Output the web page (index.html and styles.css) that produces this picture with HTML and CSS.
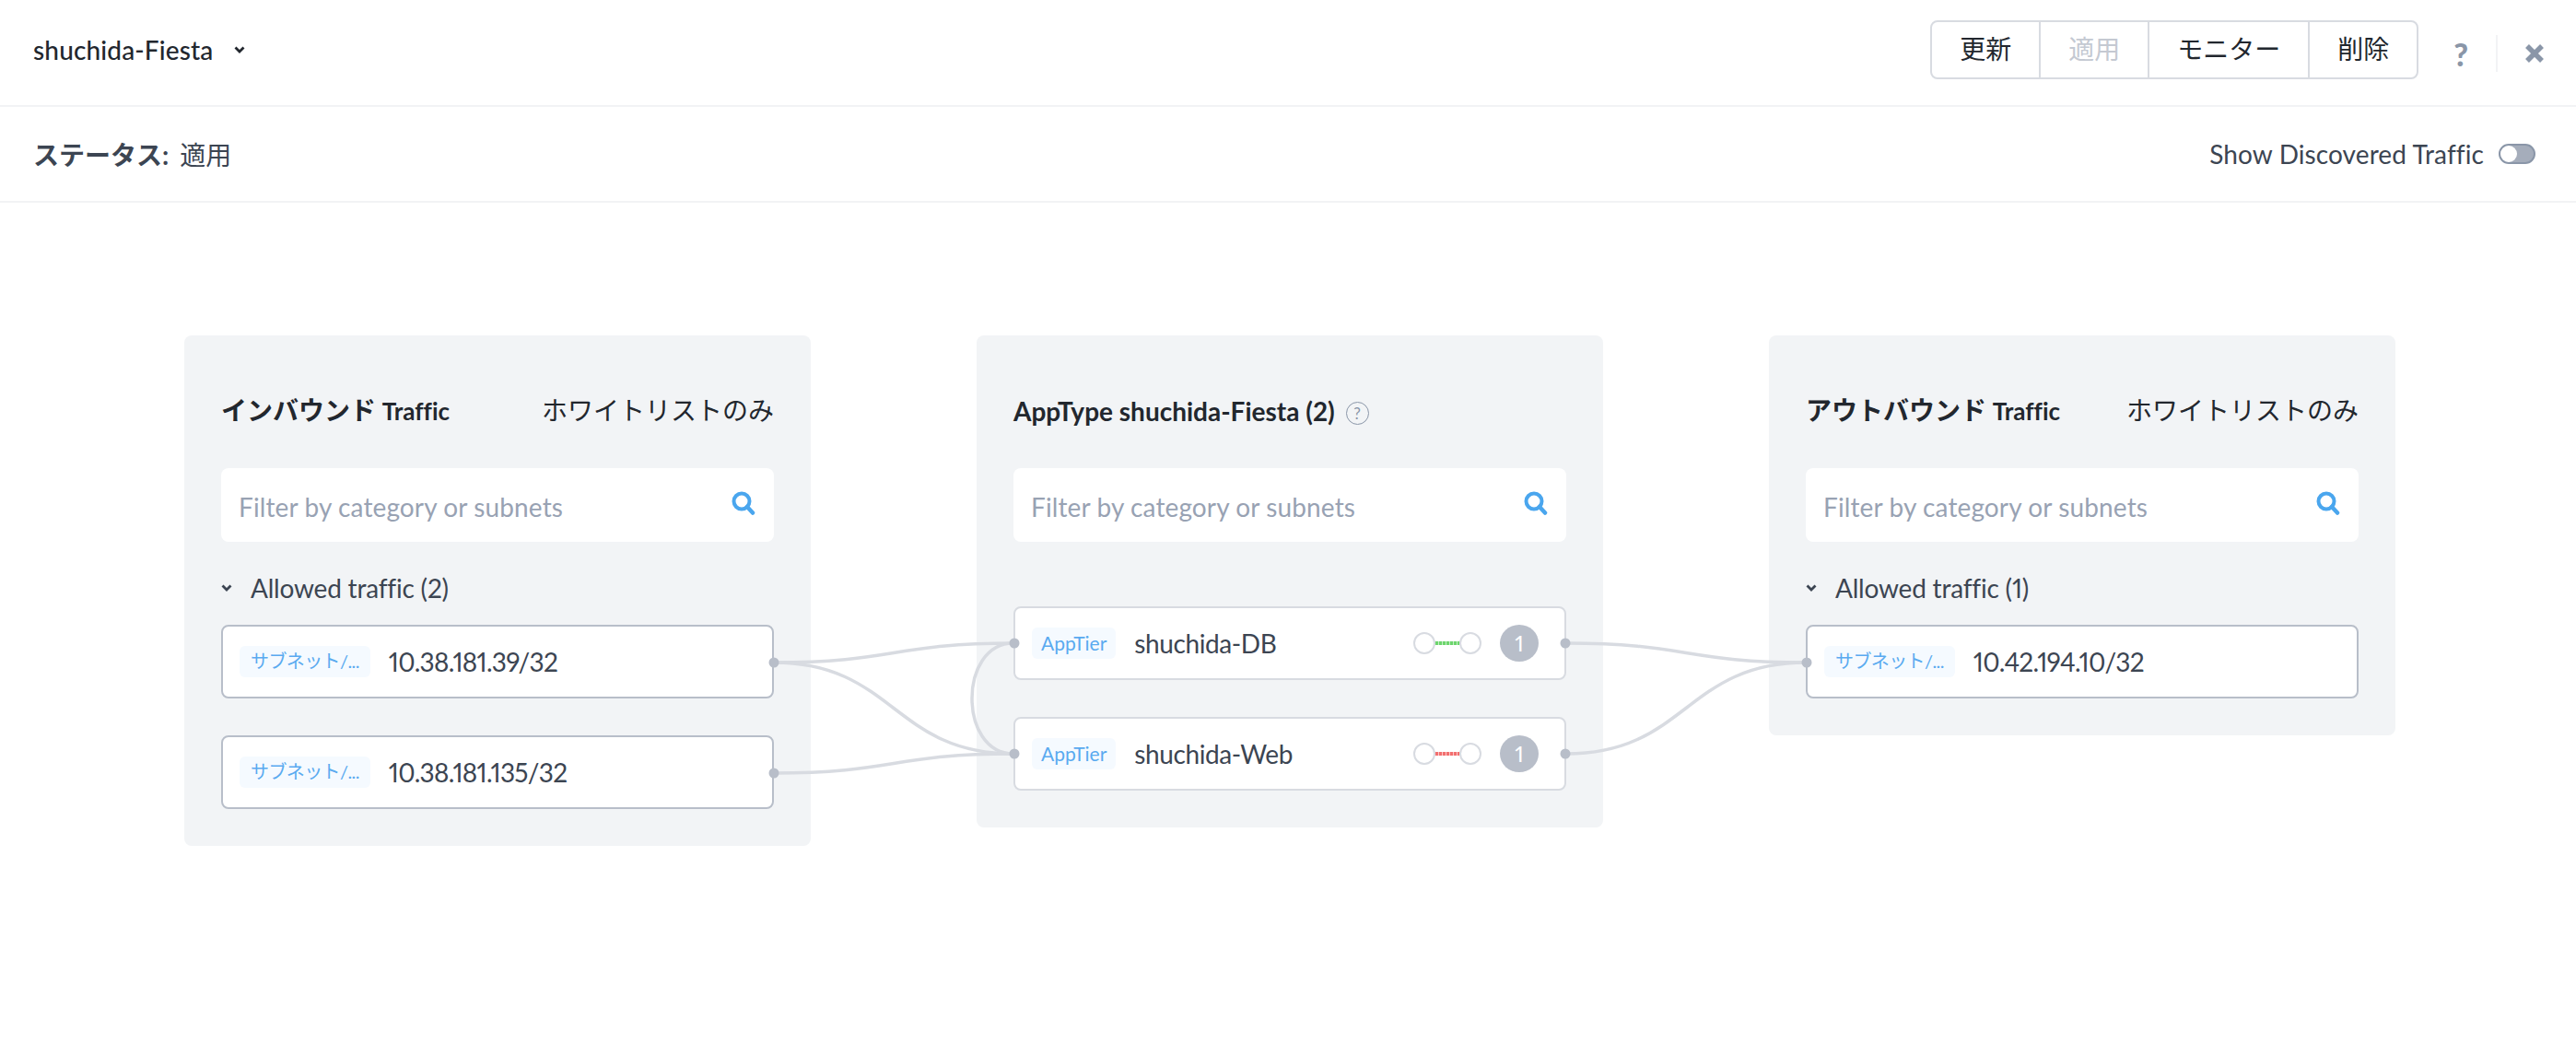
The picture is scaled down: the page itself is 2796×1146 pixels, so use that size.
FILE: index.html
```html
<!DOCTYPE html>
<html lang="ja">
<head>
    <meta charset="UTF-8">
    <title>shuchida-Fiesta</title>
    <link rel="stylesheet" href="styles.css">
</head>
<body>
<div class="topbar">
    <div class="app-name">
        <span>shuchida-Fiesta</span>
        <svg class="chevron" width="12" height="8" viewBox="0 0 12 8"><path d="M1.500 1.500 6 6l4.500-4.500" fill="none" stroke="#22272e" stroke-width="2.800"/></svg>
    </div>
    <div class="actions">
        <div class="btn-group">
            <span class="btn">更新</span>
            <span class="btn disabled">適用</span>
            <span class="btn">モニター</span>
            <span class="btn">削除</span>
        </div>
        <span class="help">?</span>
        <span class="divider"></span>
        <svg class="close" width="22" height="22" viewBox="0 0 22 22"><path d="M3 3l16 16M19 3 3 19" fill="none" stroke="#8a96a8" stroke-width="5.500"/></svg>
    </div>
</div>

<div class="statusbar">
    <div class="status"><b>ステータス:</b><span>適用</span></div>
    <div class="discovered">
        <span>Show Discovered Traffic</span>
        <span class="toggle"><i></i></span>
    </div>
</div>

<div class="canvas">
    <div class="panel">
        <div class="panel-head">
            <span class="panel-title">インバウンド <em>Traffic</em></span>
            <span class="panel-mode">ホワイトリストのみ</span>
        </div>
        <div class="filter">
            <span>Filter by category or subnets</span>
            <svg class="search" width="26" height="26" viewBox="0 0 26 26"><circle cx="11" cy="11" r="8.500" fill="none" stroke="#4aa6ee" stroke-width="4"/><path d="M17 17l6 6.500" stroke="#4aa6ee" stroke-width="4.500" stroke-linecap="round"/></svg>
        </div>
        <div class="allowed">
            <svg width="12" height="8" viewBox="0 0 12 8"><path d="M1.500 1.500 6 6l4.500-4.500" fill="none" stroke="#3c4552" stroke-width="2.800"/></svg>
            <span>Allowed traffic (2)</span>
        </div>
        <div class="rows">
            <div class="row"><span class="tag subnet">サブネット/...</span><span class="value ip">10.38.181.39/32</span></div>
            <div class="row"><span class="tag subnet">サブネット/...</span><span class="value ip">10.38.181.135/32</span></div>
        </div>
    </div>

    <div class="panel">
        <div class="panel-head mid">
            <span class="panel-title">AppType shuchida-Fiesta (2)</span>
            <span class="qmark">?</span>
        </div>
        <div class="filter">
            <span>Filter by category or subnets</span>
            <svg class="search" width="26" height="26" viewBox="0 0 26 26"><circle cx="11" cy="11" r="8.500" fill="none" stroke="#4aa6ee" stroke-width="4"/><path d="M17 17l6 6.500" stroke="#4aa6ee" stroke-width="4.500" stroke-linecap="round"/></svg>
        </div>
        <div class="rows tiers">
            <div class="row tier">
                <span class="tag">AppTier</span><span class="value">shuchida-DB</span>
                <span class="rule-state">
                    <i class="node"></i><i class="dash green"></i><i class="node"></i>
                </span>
                <span class="count">1</span>
            </div>
            <div class="row tier">
                <span class="tag">AppTier</span><span class="value">shuchida-Web</span>
                <span class="rule-state">
                    <i class="node"></i><i class="dash red"></i><i class="node"></i>
                </span>
                <span class="count">1</span>
            </div>
        </div>
    </div>

    <div class="panel">
        <div class="panel-head">
            <span class="panel-title">アウトバウンド <em>Traffic</em></span>
            <span class="panel-mode">ホワイトリストのみ</span>
        </div>
        <div class="filter">
            <span>Filter by category or subnets</span>
            <svg class="search" width="26" height="26" viewBox="0 0 26 26"><circle cx="11" cy="11" r="8.500" fill="none" stroke="#4aa6ee" stroke-width="4"/><path d="M17 17l6 6.500" stroke="#4aa6ee" stroke-width="4.500" stroke-linecap="round"/></svg>
        </div>
        <div class="allowed">
            <svg width="12" height="8" viewBox="0 0 12 8"><path d="M1.500 1.500 6 6l4.500-4.500" fill="none" stroke="#3c4552" stroke-width="2.800"/></svg>
            <span>Allowed traffic (1)</span>
        </div>
        <div class="rows">
            <div class="row"><span class="tag subnet">サブネット/...</span><span class="value ip">10.42.194.10/32</span></div>
        </div>
    </div>

    <!-- connections, coordinates are page coordinates -->
    <svg class="links" width="2796" height="926" viewBox="0 220 2796 926">
        <g fill="none" stroke="#d8dbe1" stroke-width="3.500">
            <path d="M840 719C970 719 970 698 1100 698"/>
            <path d="M840 719C970 719 970 818 1100 818"/>
            <path d="M840 839C970 839 970 818 1100 818"/>
            <path d="M1100 698C1040 698 1040 818 1100 818"/>
            <path d="M1700 698C1830 698 1830 719 1960 719"/>
            <path d="M1700 818C1830 818 1830 719 1960 719"/>
        </g>
        <g fill="#b8bec9">
            <circle cx="840" cy="719" r="5.500"/>
            <circle cx="840" cy="839" r="5.500"/>
            <circle cx="1101" cy="698" r="5.500"/>
            <circle cx="1101" cy="818" r="5.500"/>
            <circle cx="1699" cy="698" r="5.500"/>
            <circle cx="1699" cy="818" r="5.500"/>
            <circle cx="1961" cy="719" r="5.500"/>
        </g>
    </svg>
</div>
</body>
</html>
```

FILE: styles.css
```css
* {
    box-sizing: border-box;
    margin: 0;
    padding: 0;
}

body {
    background: #fff;
    color: #3c4552;
    font-family: Lato, "Noto Sans CJK JP", sans-serif;
    font-size: 28px;
    font-variant-ligatures: none;
    font-variant-numeric: proportional-nums;
}

.topbar {
    height: 116px;
    padding: 0 34px 6px 36px;
    border-bottom: 2px solid #f2f3f5;
    display: flex;
    align-items: center;
    justify-content: space-between;
}

.app-name {
    display: flex;
    align-items: center;
    gap: 23px;
    color: #22272e;
    font-weight: 500;
    letter-spacing: 0.15px;
}

.actions {
    display: flex;
    align-items: center;
}

.btn-group {
    display: flex;
    height: 64px;
    border: 2px solid #d8dbe1;
    border-radius: 8px;
}

.btn {
    padding: 0 30px;
    line-height: 58px;
    color: #22272e;
    border-right: 2px solid #d8dbe1;
}

.btn:last-child {
    border-right: 0;
}

.btn.disabled {
    color: #c4c9d2;
}

.help {
    margin: 8px 30px 0 38px;
    color: #8a96a8;
    font-size: 34px;
    font-weight: 900;
}

.divider {
    width: 2px;
    height: 40px;
    margin-top: 8px;
    background: #f2f3f5;
}

.close {
    margin: 8px 0 0 29px;
}

.statusbar {
    height: 104px;
    padding: 0 44px 0 36px;
    border-bottom: 2px solid #f2f3f5;
    display: flex;
    align-items: center;
    justify-content: space-between;
}

.status {
    display: flex;
    gap: 12px;
}

.status b {
    font-weight: 700;
}

.discovered {
    display: flex;
    align-items: center;
    gap: 16px;
    letter-spacing: 0.1px;
}

.toggle {
    width: 40px;
    height: 22px;
    border-radius: 11px;
    background: #a5adbb;
    border: 2px solid #8a96a8;
}

.toggle i {
    display: block;
    width: 18px;
    height: 18px;
    border-radius: 50%;
    background: #fff;
}

.canvas {
    position: relative;
    padding: 144px 196px 0 200px;
    display: flex;
    align-items: flex-start;
    gap: 180px;
}

.links {
    position: absolute;
    left: 0;
    top: 0;
    pointer-events: none;
}

.panel {
    width: 680px;
    padding: 40px;
    background: #f2f4f6;
    border-radius: 8px;
}

.panel-head {
    height: 84px;
    margin-bottom: 20px;
    padding-bottom: 4px;
    display: flex;
    align-items: center;
    justify-content: space-between;
}

.panel-head.mid {
    justify-content: flex-start;
    gap: 12px;
    padding: 0;
}

.panel-title {
    color: #22272e;
    font-weight: 700;
}

.panel-title em {
    font-size: 26px;
    font-style: normal;
}

.panel-mode {
    color: #22272e;
    font-weight: 400;
}

.qmark {
    width: 25px;
    height: 25px;
    margin-top: 4px;
    border: 1px solid #8a96a8;
    border-radius: 50%;
    color: #8a96a8;
    font-size: 17px;
    line-height: 23px;
    text-align: center;
}

.filter {
    height: 80px;
    padding: 0 20px 0 19px;
    background: #fff;
    border-radius: 8px;
    display: flex;
    align-items: center;
    justify-content: space-between;
    color: #98a2b3;
    letter-spacing: 0.12px;
}

.filter span {
    padding-top: 3px;
}

.search {
    margin-top: -4px;
}

.allowed {
    height: 50px;
    margin: 25px 0 15px;
    display: flex;
    align-items: center;
    gap: 20px;
    letter-spacing: -0.2px;
}

.rows {
    display: flex;
    flex-direction: column;
    gap: 40px;
}

.tiers {
    margin-top: 70px;
}

.row {
    height: 80px;
    padding: 0 18px;
    background: #fff;
    border: 2px solid #b8bec9;
    border-radius: 8px;
    display: flex;
    align-items: center;
    gap: 20px;
}

.row.tier {
    border-color: #d8dbe1;
    padding-right: 28px;
}

.tag {
    height: 34px;
    padding: 0 10px;
    background: #f5faff;
    border-radius: 6px;
    color: #5aaaf0;
    font-size: 21px;
    line-height: 33px;
    white-space: nowrap;
}

.tag.subnet {
    padding: 0 12px;
    font-size: 20px;
    letter-spacing: -0.6px;
}

.value {
    color: #3c4552;
    letter-spacing: -0.4px;
}

.value.ip {
    letter-spacing: -0.7px;
}

.rule-state {
    margin-left: auto;
    display: flex;
    align-items: center;
}

.node {
    width: 24px;
    height: 24px;
    border: 2px solid #d8dbe1;
    border-radius: 50%;
}

.dash {
    width: 26px;
    height: 4px;
}

.dash.green {
    background: repeating-linear-gradient(90deg, #6dd56d 0 3px, #c6efc6 3px 4px);
}

.dash.red {
    background: repeating-linear-gradient(90deg, #f26f6f 0 3px, #fbcaca 3px 4px);
}

.count {
    width: 42px;
    height: 40px;
    border-radius: 50%;
    background: #b8bec9;
    color: #fff;
    font-size: 24px;
    line-height: 40px;
    text-align: center;
}
```
